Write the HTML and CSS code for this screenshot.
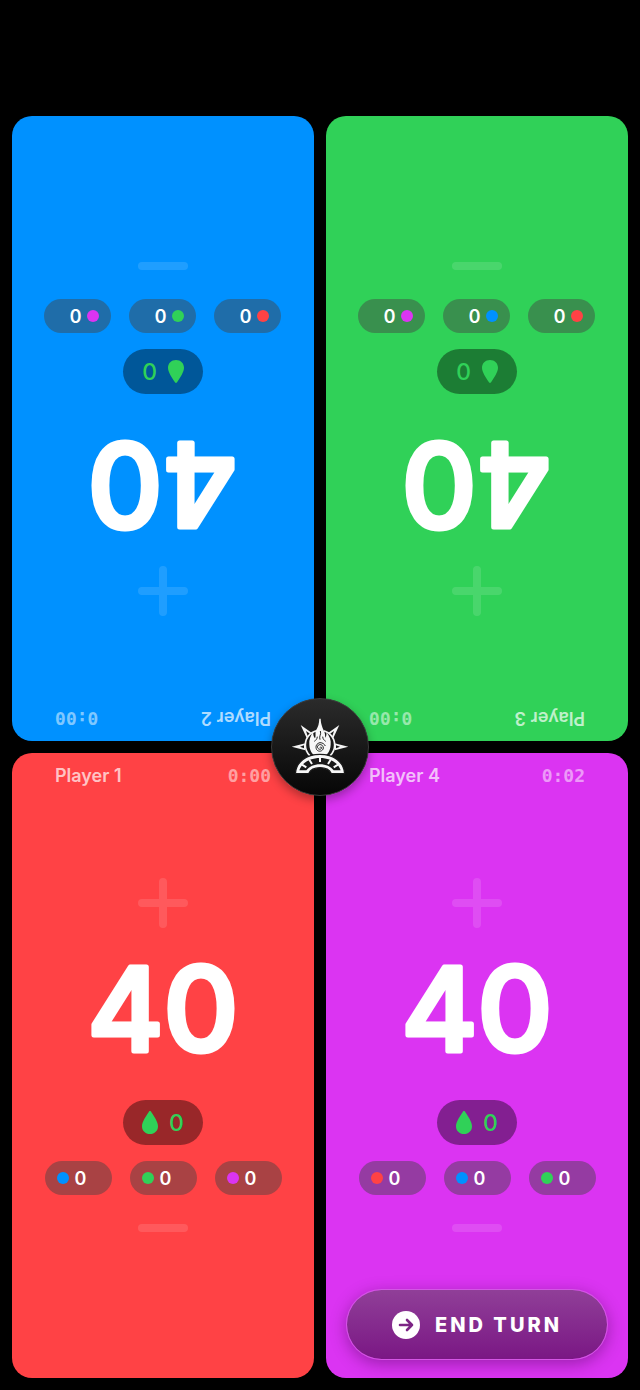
FILE: index.html
```html
<!DOCTYPE html>
<html lang="en">
<head>
<meta charset="utf-8">
<meta name="viewport" content="width=device-width, initial-scale=1">
<title>Life Counter</title>
<link rel="stylesheet" href="styles.css">
</head>
<body>
<svg class="defs" aria-hidden="true">
  <symbol id="drop" viewBox="0 0 16 23"><path d="M8 0C8.700 0 9 .6 9.400 1.200C12 5 16 11 16 15.200C16 19.800 12.600 23 8 23S0 19.800 0 15.200C0 11 4 5 6.600 1.200C7 .6 7.300 0 8 0Z"/></symbol>
  <symbol id="plus" viewBox="0 0 50 50"><path d="M25 4V46M4 25H46"/></symbol>
  <symbol id="minus" viewBox="0 0 50 50"><path d="M4 25H46"/></symbol>
</svg>
<main class="board">
  <section class="card blue flipped">
    <header class="head"><span class="name">Player 2</span><span class="time">0:00</span></header>
    <div class="life">
      <button class="step" aria-label="Gain life"><svg><use href="#plus"/></svg></button>
      <svg class="total"><text x="50%" y="123">40</text></svg>
      <button class="poison" aria-label="Poison"><svg><use href="#drop"/></svg>0</button>
      <div class="damage">
        <button class="chip"><i class="dot red"></i>0</button>
        <button class="chip"><i class="dot green"></i>0</button>
        <button class="chip"><i class="dot purple"></i>0</button>
      </div>
      <button class="step" aria-label="Lose life"><svg><use href="#minus"/></svg></button>
    </div>
  </section>
  <section class="card green flipped">
    <header class="head"><span class="name">Player 3</span><span class="time">0:00</span></header>
    <div class="life">
      <button class="step" aria-label="Gain life"><svg><use href="#plus"/></svg></button>
      <svg class="total"><text x="50%" y="123">40</text></svg>
      <button class="poison" aria-label="Poison"><svg><use href="#drop"/></svg>0</button>
      <div class="damage">
        <button class="chip"><i class="dot red"></i>0</button>
        <button class="chip"><i class="dot blue"></i>0</button>
        <button class="chip"><i class="dot purple"></i>0</button>
      </div>
      <button class="step" aria-label="Lose life"><svg><use href="#minus"/></svg></button>
    </div>
  </section>
  <section class="card red">
    <header class="head"><span class="name">Player 1</span><span class="time">0:00</span></header>
    <div class="life">
      <button class="step" aria-label="Gain life"><svg><use href="#plus"/></svg></button>
      <svg class="total"><text x="50%" y="123">40</text></svg>
      <button class="poison" aria-label="Poison"><svg><use href="#drop"/></svg>0</button>
      <div class="damage">
        <button class="chip"><i class="dot blue"></i>0</button>
        <button class="chip"><i class="dot green"></i>0</button>
        <button class="chip"><i class="dot purple"></i>0</button>
      </div>
      <button class="step" aria-label="Lose life"><svg><use href="#minus"/></svg></button>
    </div>
  </section>
  <section class="card purple">
    <header class="head"><span class="name">Player 4</span><span class="time">0:02</span></header>
    <div class="life">
      <button class="step" aria-label="Gain life"><svg><use href="#plus"/></svg></button>
      <svg class="total"><text x="50%" y="123">40</text></svg>
      <button class="poison" aria-label="Poison"><svg><use href="#drop"/></svg>0</button>
      <div class="damage">
        <button class="chip"><i class="dot red"></i>0</button>
        <button class="chip"><i class="dot blue"></i>0</button>
        <button class="chip"><i class="dot green"></i>0</button>
      </div>
      <button class="step" aria-label="Lose life"><svg><use href="#minus"/></svg></button>
    </div>
    <button class="end">
      <svg viewBox="0 0 28 28"><circle cx="14" cy="14" r="14" fill="#fff"/><path d="M8 14H20M15 9L20 14L15 19" fill="none" stroke="#7c2485" stroke-width="2.600" stroke-linecap="round" stroke-linejoin="round"/></svg>
      <span>END TURN</span>
    </button>
  </section>
  <button class="hub" aria-label="Menu">
    <svg viewBox="0 0 180 198">
      <path d="M32 33L66 57L50 72Z M148 33L114 57L130 72Z M5 98L46 88V109Z M175 98L134 88V109Z" fill="#f4f4f4"/>
      <path d="M48 51L60 59L53 66Z M132 51L120 59L127 66Z M30 98L42 94V103Z M150 98L138 94V103Z" fill="#191919"/>
      <circle cx="90" cy="93" r="44" fill="#191919" stroke="#f4f4f4" stroke-width="5"/>
      <path d="M80 58V42H102V58Z" fill="#191919"/>
      <path d="M88 14H92C93 33 98 41 102 51C106 60 105 66 106 71C109 67 110 62 109 54C119 67 124 79 122 92C121 114 108 129 90 129S59 114 58 92C56 79 62 65 70 52C69 63 71 68 75 73C79 63 74 57 79 47C85 37 87 29 88 14Z" fill="#f7f7f7"/>
      <path d="M91 51C95 61 86 66 90 77M73 82C78 78 81 76 82 68M107 82C102 78 99 76 98 68" fill="none" stroke="#222" stroke-width="3"/>
      <path d="M90 101C91 97 97 99 94 104C89 109 80 103 83 96C88 88 100 92 100 102C99 112 86 115 80 107C75 97 80 88 90 86C98 86 103 90 106 96" fill="none" stroke="#222" stroke-width="3"/>
      <path d="M16 179C18 143 50 121 90 121S162 143 164 179H124C119 168 107 161 90 161S61 168 56 179Z" fill="#f7f7f7" stroke="#191919" stroke-width="4"/>
      <path d="M28 169C35 146 60 132 90 132S145 146 152 169H131C122 158 108 151 90 151S58 158 49 169Z" fill="#191919"/>
      <path d="M36 152L49 160M58 137L66 150M90 131V144M122 137L114 150M144 152L131 160" stroke="#f7f7f7" stroke-width="6"/>
    </svg>
  </button>
</main>
</body>
</html>
```
FILE: styles.css
```css
* { box-sizing: border-box; }

body {
  margin: 0;
  background: #000;
  color: #fff;
  font-family: Inter, "Noto Sans", sans-serif;
}

button {
  border: 0;
  padding: 0;
  background: none;
  color: inherit;
  font: inherit;
  cursor: pointer;
}

svg { display: block; }

.defs { display: none; }

.board {
  position: relative;
  display: grid;
  grid-template-columns: 1fr 1fr;
  grid-template-rows: 1fr 1fr;
  gap: 12px;
  min-height: 100vh;
  padding: 0 12px;
  border: solid #000;
  border-width: 116px 0 12px;
}

.card {
  display: grid;
  grid-template-rows: 1fr auto 1fr;
  padding: 11px 20px;
  border-radius: 20px;
}

.flipped { transform: rotate(180deg); }

.blue { background: #0091ff; }
.green { background: #30d158; }
.red { background: #ff4245; }
.purple { background: #db34f2; }

.head {
  display: flex;
  align-items: center;
  align-self: start;
  justify-content: space-between;
  padding: 0 23px;
  font-size: 18px;
  line-height: 24px;
}

.name {
  color: rgba(255, 255, 255, .7);
  font-weight: 600;
}

.time {
  color: rgba(255, 255, 255, .5);
  font-family: "DejaVu Sans Mono", monospace;
  font-weight: 700;
}

.life {
  display: flex;
  flex-direction: column;
  align-items: center;
}

.step svg {
  width: 50px;
  height: 50px;
  fill: none;
  stroke: #fff;
  stroke-width: 8;
  stroke-linecap: round;
  opacity: .12;
}

.total {
  width: 100%;
  height: 162px;
  margin-bottom: 10px;
  fill: #fff;
  stroke: #fff;
  stroke-width: 5;
  stroke-linejoin: round;
  font-size: 116px;
  font-weight: 500;
  text-anchor: middle;
}

.poison {
  display: flex;
  align-items: center;
  justify-content: center;
  gap: 11px;
  width: 80px;
  height: 45px;
  border-radius: 23px;
  background: rgba(0, 0, 0, .4);
  color: #30d158;
  font-size: 23px;
  font-weight: 500;
}

.poison svg {
  width: 16px;
  height: 23px;
  fill: #30d158;
}

.damage {
  display: flex;
  gap: 18px;
  margin: 16px 0 8px;
}

.chip {
  display: flex;
  align-items: center;
  gap: 6px;
  width: 67px;
  height: 34px;
  padding-left: 12px;
  border-radius: 17px;
  background: rgba(67, 67, 67, .46);
  font-size: 18px;
  font-weight: 600;
}

.dot {
  width: 12px;
  height: 12px;
  border-radius: 50%;
}

.end {
  display: flex;
  align-items: center;
  align-self: end;
  justify-content: center;
  gap: 15px;
  height: 71px;
  margin-bottom: 7px;
  border: 1px solid rgba(205, 120, 215, .5);
  border-radius: 36px;
  background: linear-gradient(#903f98, #7a1784) padding-box;
  box-shadow: 0 4px 16px rgba(60, 0, 70, .4);
  font-size: 20px;
  font-weight: 800;
  letter-spacing: 3px;
}

.end svg {
  width: 28px;
  height: 28px;
}

.hub {
  position: absolute;
  top: 50%;
  left: 50%;
  display: grid;
  place-items: center;
  width: 98px;
  height: 98px;
  border: 1px solid #3a3a3a;
  border-radius: 50%;
  background: linear-gradient(#2b2b2b, #060606);
  box-shadow: 0 4px 10px rgba(0, 0, 0, .3);
  transform: translate(-50%, -50%);
}

.hub svg {
  width: 60px;
  height: 66px;
}
```
